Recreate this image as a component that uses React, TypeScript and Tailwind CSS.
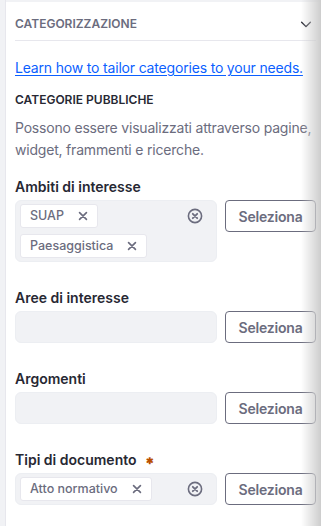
import React from "react";

const font = { fontFamily: "Inter, 'Noto Sans', sans-serif" };

function X({ className = "" }: { className?: string }) {
  return (
    <svg viewBox="0 0 16 16" className={className} fill="none" stroke="currentColor" strokeWidth="2.6" strokeLinecap="round">
      <path d="M2.5 2.5l11 11M13.5 2.5l-11 11" />
    </svg>
  );
}

function ClearIcon() {
  return (
    <svg viewBox="0 0 16 16" className="w-[16px] h-[16px] text-[#6b6c7e]" fill="none" stroke="currentColor">
      <circle cx="8" cy="8" r="6.6" strokeWidth="1.6" />
      <path d="M5.8 5.8l4.4 4.4M10.2 5.8l-4.4 4.4" strokeWidth="1.8" strokeLinecap="round" />
    </svg>
  );
}

function Tag({ label }: { label: string }) {
  return (
    <div className="flex items-center h-[24px] px-[9px] gap-[14px] bg-white border border-[#e7e7ed] rounded-[3px] text-[12.5px] text-[#6b6c7e] font-medium">
      <span>{label}</span>
      <X className="w-[10px] h-[10px] text-[#6b6c7e]" />
    </div>
  );
}

function Field({ label, tags, required }: { label: string; tags: string[]; required?: boolean }) {
  return (
    <div className="flex flex-col">
      <div className="flex items-center h-[20px] text-[14px] font-semibold text-[#272833] mb-[4px]">
        {label}
        {required && <span className="ml-[9px] mt-[3px] text-[#b95000] text-[9px]">✱</span>}
      </div>
      <div className="flex gap-[8px] items-start">
        <div className="w-[202px] min-h-[32px] bg-[#f1f2f5] rounded-[6px] flex items-start px-[4px] py-[3px] border border-[#eceef2]">
          <div className="flex flex-wrap gap-[6px] flex-1">
            {tags.map((t) => (
              <Tag key={t} label={t} />
            ))}
          </div>
          {tags.length > 0 && (
            <div className="h-[24px] flex items-center pr-[9px]">
              <ClearIcon />
            </div>
          )}
        </div>
        <button className="w-[91px] h-[32px] border border-[#6b6c7e] rounded-[4px] text-[14px] font-semibold text-[#6b6c7e] bg-white tracking-[-0.2px]">
          Seleziona
        </button>
      </div>
    </div>
  );
}

export default function App() {
  return (
    <div style={font} className="relative w-[321px] h-[526px] overflow-hidden bg-white flex">
      <div className="w-[7px] bg-[#f1f2f5] border-r border-[#e7e7ed]" />
      <div className="flex-1 flex flex-col border-t-[2px] border-[#f1f2f5]">
        <div className="flex items-center justify-between pl-[9px] pr-[8px] pt-[14px] pb-[8px]">
          <span className="text-[12px] leading-[16px] font-semibold text-[#6b6c7e]">CATEGORIZZAZIONE</span>
          <svg viewBox="0 0 16 16" className="w-[14px] h-[14px] text-[#272833]" fill="none" stroke="currentColor" strokeWidth="1.6" strokeLinecap="round" strokeLinejoin="round">
            <path d="M3 6l5 5 5-5" />
          </svg>
        </div>
        <div className="ml-[9px] mr-[5px] h-px bg-[#e7e7ed]" />
        <div className="pl-[9px] pr-[5px] flex flex-col">
          <a className="mt-[17px] text-[14px] leading-[20px] text-[#0b5fff] underline underline-offset-[2px] whitespace-nowrap tracking-[-0.18px]">
            Learn how to tailor categories to your needs.
          </a>
          <div className="mt-[12px] text-[12px] font-semibold text-[#272833] leading-[20px]">CATEGORIE PUBBLICHE</div>
          <div className="mt-[7px] text-[14px] leading-[22px] text-[#6b6c7e] tracking-[-0.2px]">
            Possono essere visualizzati attraverso pagine, widget, frammenti e ricerche.
          </div>
          <div className="mt-[15px] flex flex-col gap-[25px]">
            <Field label="Ambiti di interesse" tags={["SUAP", "Paesaggistica"]} />
            <Field label="Aree di interesse" tags={[]} />
            <Field label="Argomenti" tags={[]} />
            <Field label="Tipi di documento" tags={["Atto normativo"]} required />
          </div>
        </div>
      </div>
      <div className="absolute top-0 right-0 w-[20px] h-full bg-gradient-to-r from-transparent to-[#cdcdcd] pointer-events-none" />
    </div>
  );
}
